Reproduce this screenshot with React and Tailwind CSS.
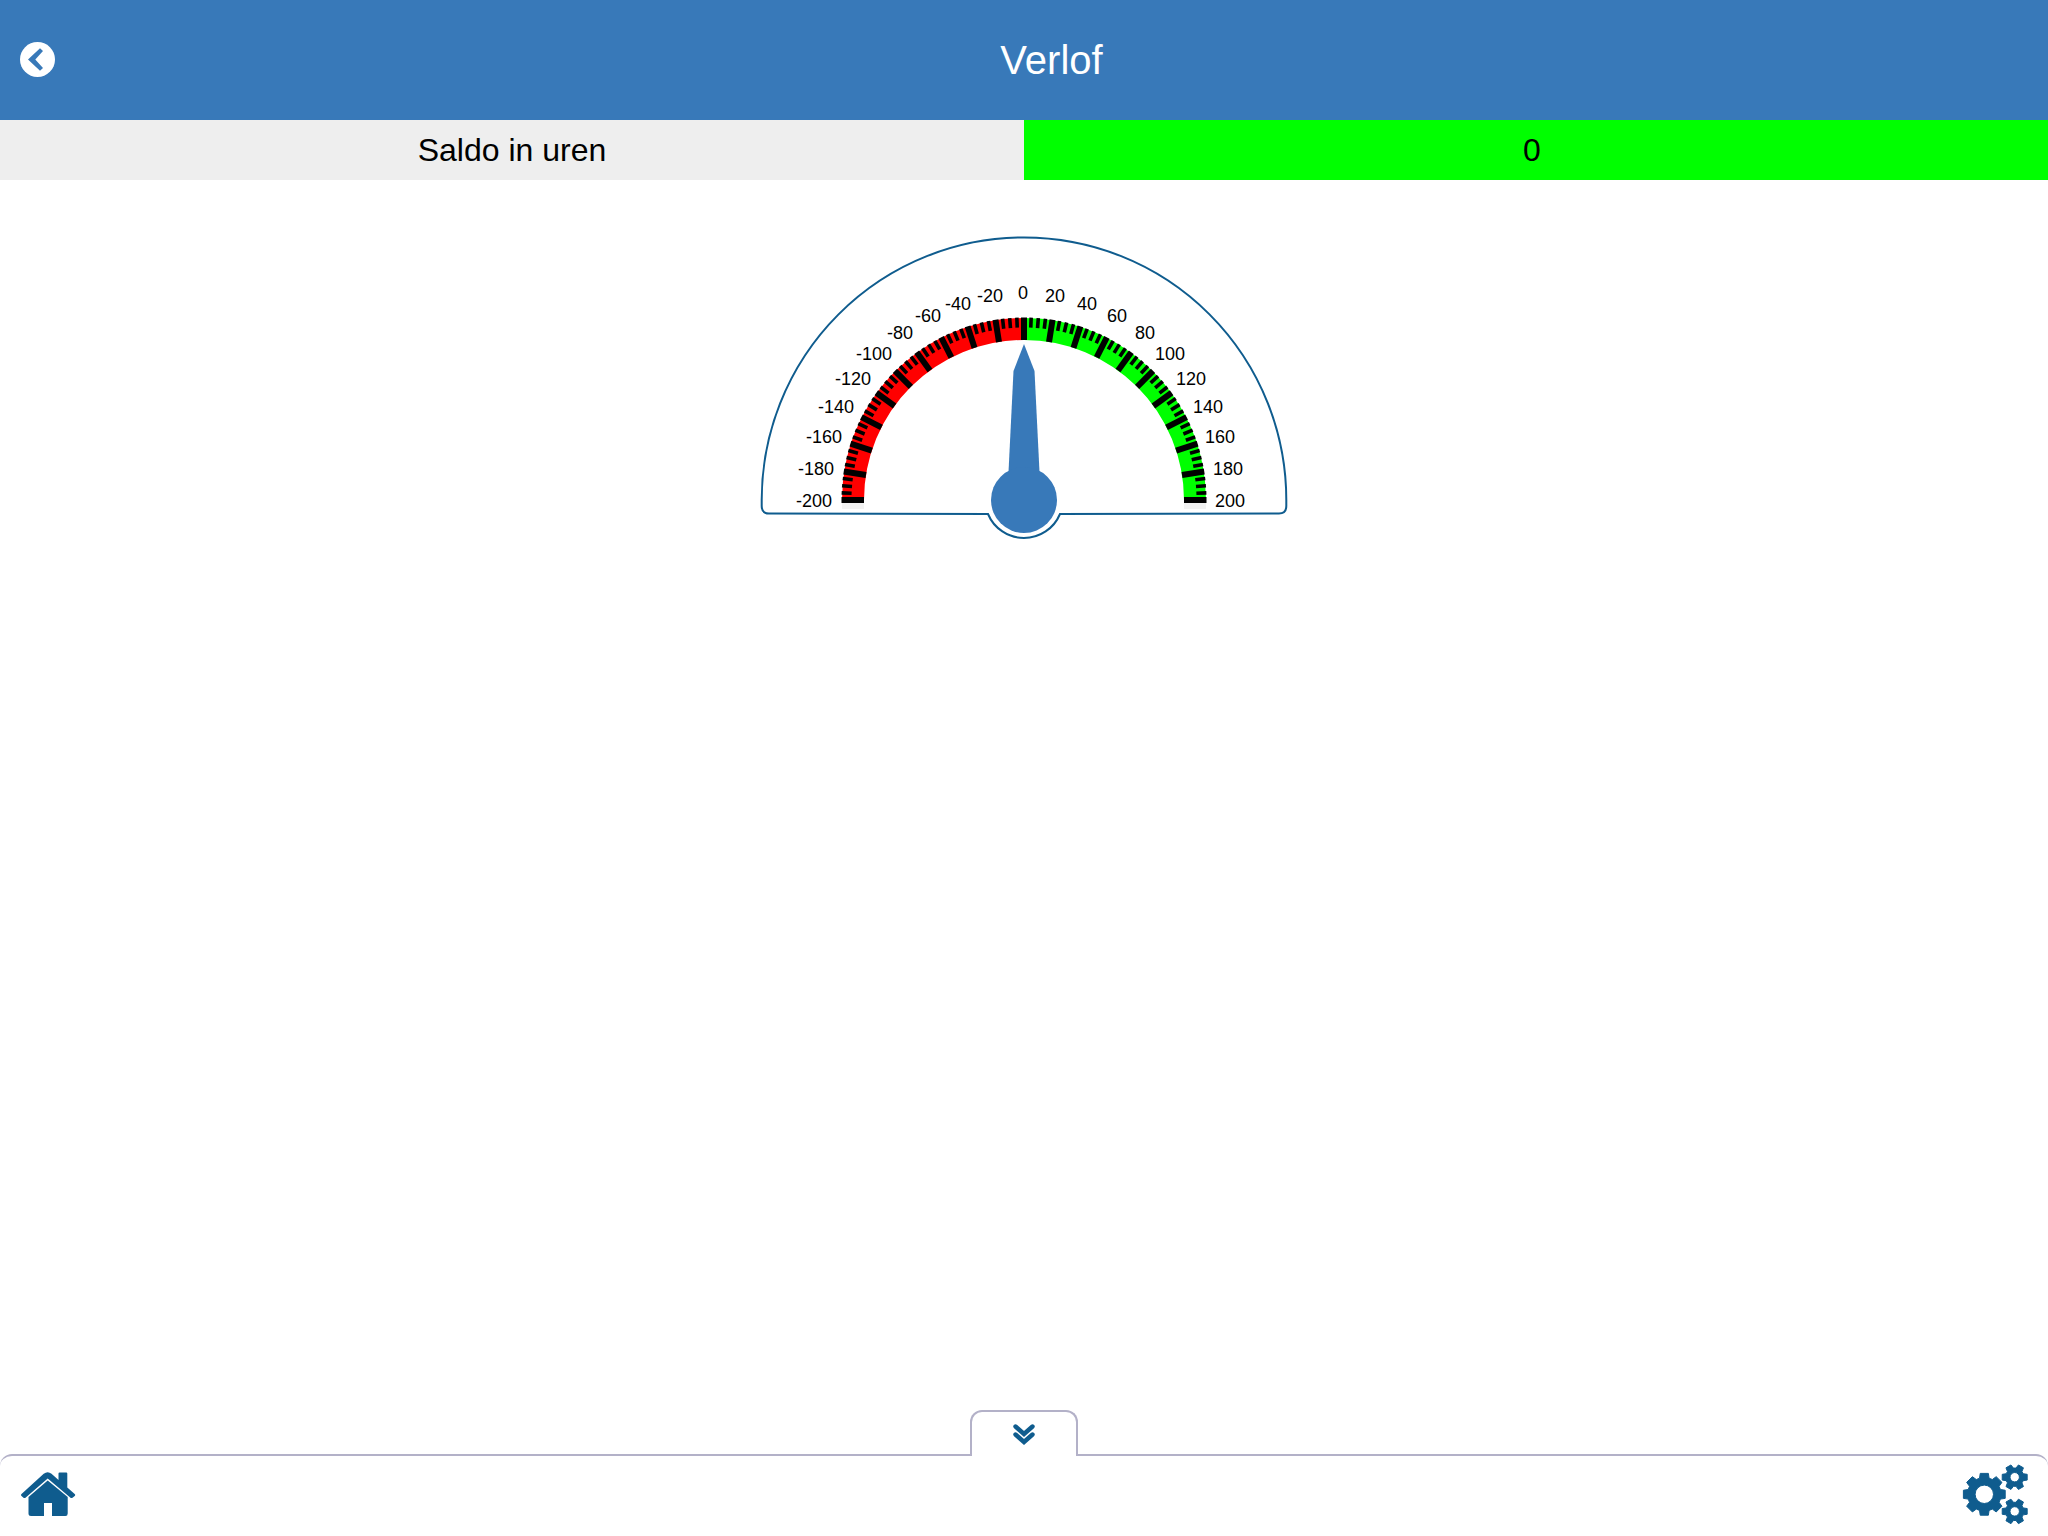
const CX = 280;
const CY = 300;
const point = (x, y, deg, r) => {
  const a = (deg * Math.PI) / 180;
  return `${x + r * Math.sin(a)} ${y - r * Math.cos(a)}`;
};

// Text position of each label: [value, x, baseline]
const LABELS = [
  [-200, 52, 307], [-180, 54, 275], [-160, 62, 243], [-140, 74, 213],
  [-120, 91, 185], [-100, 112, 160], [-80, 143, 139], [-60, 171, 122],
  [-40, 201, 110], [-20, 233, 102], [0, 274, 99],
  [20, 301, 102], [40, 333, 110], [60, 363, 122], [80, 391, 139],
  [100, 411, 160], [120, 432, 185], [140, 449, 213], [160, 461, 243],
  [180, 469, 275], [200, 471, 307],
];

const ring = (from, to) =>
  `M${point(CX, CY, from, 182)}A182 182 0 0 1 ${point(CX, CY, to, 182)}L${point(CX, CY, to, 160)}A160 160 0 0 0 ${point(CX, CY, from, 160)}Z`;

function Gauge() {
  const ticks = [];
  for (let v = -200; v <= 200; v += 5) ticks.push(v);
  return (
    <svg viewBox="0 0 560 360" className="h-[360px] w-[560px]" role="img" aria-label="Saldo in uren: 0">
      <path
        d="M17.700 300A262.300 262.500 0 0 1 542.300 300V306Q542.300 313.500 535 313.500L316 314A39 39 0 0 1 244 314L25 313.500Q17.700 313.500 17.700 306Z"
        fill="#fff"
        stroke="#0f5c8e"
        strokeWidth="2"
      />
      <path d="M98 303h22v6h-22zM440 303h22v6h-22z" fill="#f2f2f2" />
      <path d={ring(-90, 0)} fill="#f00" />
      <path d={ring(0, 90)} fill="#0f0" />
      {ticks.map((v) => {
        const major = v % 20 === 0;
        return (
          <rect
            key={v}
            x={CX - (major ? 3 : 1.8)}
            y={CY - 182.5}
            width={major ? 6 : 3.6}
            height={major ? 22.5 : 10}
            transform={`rotate(${(v / 200) * 90} ${CX} ${CY})`}
          />
        );
      })}
      {LABELS.map(([v, x, y]) => (
        <text key={v} x={x} y={y} fontSize="18">
          {v}
        </text>
      ))}
      <path d="M280 144L290.500 171L295.500 272H264.500L269.500 171Z" fill="#3879b9" />
      <circle cx="280" cy="300" r="33" fill="#3879b9" />
    </svg>
  );
}

const gear = (x, y, teeth, tip, root, tipHalf, rootHalf, hole) => {
  const pts = [];
  for (let i = 0; i < teeth; i++) {
    const a = 90 + (i * 360) / teeth;
    pts.push(
      point(x, y, a - rootHalf, root),
      point(x, y, a - tipHalf, tip),
      point(x, y, a + tipHalf, tip),
      point(x, y, a + rootHalf, root),
    );
  }
  return `M${pts.join("L")}ZM${x - hole} ${y}a${hole} ${hole} 0 1 0 ${2 * hole} 0a${hole} ${hole} 0 1 0 ${-2 * hole} 0Z`;
};

function Cogs() {
  return (
    <svg viewBox="0 0 66 61" className="h-[61px] w-[66px]" fill="#0f5c8e" fillRule="evenodd" stroke="#0f5c8e" strokeLinejoin="round">
      <path d={gear(22.3, 30.3, 8, 21.3, 16.8, 11, 16.5, 9.2)} />
      <path d={gear(52.7, 13.2, 6, 12.8, 9.2, 13, 22, 4.7)} />
      <path d={gear(52.7, 47.4, 6, 12.8, 9.2, 13, 22, 4.7)} />
    </svg>
  );
}

export default function App() {
  return (
    <div className="flex min-h-screen flex-col bg-white font-['Liberation_Sans',Arial,sans-serif] text-black">
      <header className="flex h-[120px] items-center bg-[#3879b9] pl-5 text-white">
        <button type="button" aria-label="Terug">
          <svg viewBox="0 0 35 36" className="h-9 w-[35px]">
            <circle cx="17.500" cy="17.500" r="17.500" fill="#fff" />
            <path d="M8 17.500L20 6.300L23 9L15.300 17.500L23 26L20 28.700Z" fill="#3879b9" />
          </svg>
        </button>
        <h1 className="flex-1 text-center text-[40px] leading-[48px]">Verlof</h1>
      </header>
      <dl className="grid h-[60px] grid-cols-2 text-center text-[32px] leading-[60px]">
        <dt className="bg-[#eee]">Saldo in uren</dt>
        <dd className="bg-[#0f0] pr-2">0</dd>
      </dl>
      <main className="flex flex-1 justify-center pt-5">
        <Gauge />
      </main>
      <footer className="relative flex h-[82px] items-start justify-between rounded-t-xl border-t-2 border-[#b3b1c8] bg-white pr-5 pl-[21px]">
        <button
          type="button"
          aria-label="Inklappen"
          className="absolute bottom-full left-1/2 flex h-[46px] w-27 -translate-x-1/2 items-center justify-center rounded-t-xl border-2 border-b-0 border-[#b3b1c8] bg-white"
        >
          <svg viewBox="0 0 22 21" className="h-[21px] w-[22px]" fill="none" stroke="#0f5c8e" strokeWidth="4.400" strokeLinecap="round">
            <path d="M2.500 2.500L11 10L19.500 2.500M2.500 10.500L11 18L19.500 10.500" />
          </svg>
        </button>
        <button type="button" aria-label="Home" className="mt-4">
          <svg viewBox="0 0 55 45" className="h-[45px] w-[55px]" fill="#0f5c8e">
            <path d="M26.700 8.500L46.700 25V41.500Q46.700 44 44.500 44H31V31H23V44H10Q7.500 44 7.500 41.500V25Z" />
            <path d="M0.500 22L22.700 1.800Q26.700 -1.500 30.500 1.800L37.500 8V1.500Q37.500 0.500 38.700 0.500H45.200Q46.300 0.500 46.300 1.500V15.500L53.700 22Q54.700 23 53.700 24L51.500 25.700Q50.500 26.500 49.500 25.700L26.700 6.500L4.500 25.700Q3.500 26.500 2.500 25.700L0.500 24Q-0.500 23 0.500 22Z" />
          </svg>
        </button>
        <button type="button" aria-label="Instellingen" className="mt-2">
          <Cogs />
        </button>
      </footer>
    </div>
  );
}
